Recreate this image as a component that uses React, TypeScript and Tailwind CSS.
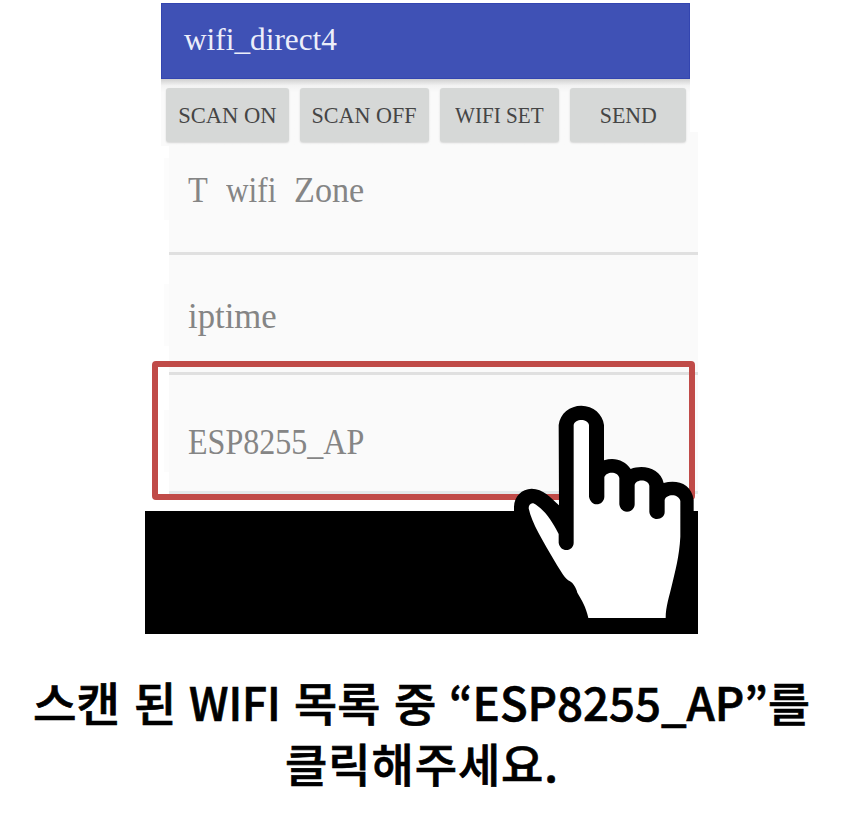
import React from "react";

const buttons = [
  { label: "SCAN ON", box: "w-[123px]", text: "scale-x-[.94]" },
  { label: "SCAN OFF", box: "w-[129px] ml-[11px]", text: "scale-x-[.92]" },
  { label: "WIFI SET", box: "w-[119px] ml-[11px]", text: "scale-x-[.88]" },
  { label: "SEND", box: "w-[116px] ml-[11px]", text: "scale-x-[.91]" },
];

function HandPointer() {
  return (
    <svg className="absolute left-[500px] top-[390px] h-[250px] w-[210px]" viewBox="0 0 630 750">
      <path
        fill="#000"
        d="M42 365V350C43 318 65 297 95 296C130 297 150 320 177 346L176 105C180 70 210 47 244 47C280 47 308 72 312 105V211C345 200 375 212 392 237C430 222 482 235 491 279C530 268 575 280 581 330V365L560 700H240Z"
      />
      <path
        fill="#fff"
        d="M265 684C258 650 245 630 232 608C228 592 218 578 210 574C195 566 185 548 165 515C130 455 95 400 86 355C86 345 92 338 100 340C130 355 155 390 176 432V458C178 472 188 480 199 480C212 480 221 470 221 458V105C225 85 263 85 267 105V320C270 335 280 343 290 343C302 343 313 333 313 320V262C318 243 354 243 358 264V343C360 358 370 365 381 365C394 365 404 355 404 343V285C408 267 444 267 448 287V366C450 380 460 387 471 387C484 387 494 378 494 366V330C500 311 536 311 541 333V440C538 500 525 545 517 580C508 620 497 650 497 684Z"
      />
    </svg>
  );
}

export default function App() {
  return (
    <div className="relative h-[824px] w-[842px] overflow-hidden bg-white pt-[3px]">
      <div className="font-['Liberation_Serif',serif]">
        <header className="ml-[161px] flex h-[76px] w-[529px] items-center border border-[#3345b0] bg-[#3f51b5] pl-[22px]">
          <span className="-mt-[2px] text-[31.3px] leading-none text-[#eceefa]">wifi_direct4</span>
        </header>
        <div className="ml-[161px] flex h-[67px] w-[537px]">
          <div className="flex w-[529px] bg-[#fafafa] bg-linear-to-b from-[#d0d0d0] via-[#f3f3f3] via-10% to-[#fafafa] to-20% pl-[5px] pt-[9px]">
            {buttons.map((b) => (
              <button
                key={b.label}
                className={"flex h-[54px] shrink-0 items-center justify-center rounded-[3px] bg-[#d6d8d7] shadow-[0_1px_2px_rgba(0,0,0,0.15)] " + b.box}
              >
                <span className={"whitespace-nowrap text-[24px] leading-none text-[#454545] " + b.text}>{b.label}</span>
              </button>
            ))}
          </div>
          <div className="h-[14px] w-[8px] self-end bg-[#fafafa]" />
        </div>
        <ul className="ml-[169px] w-[529px] text-[36px] leading-none text-[#858585]">
          <li className="relative h-[109px] border-b-[3px] border-[#e0e0e0] bg-[#fafafa] pl-[19px] pt-[26px]">
            <div className="absolute -left-[5px] top-[12px] h-[62px] w-[5px] bg-[#fcfcfc]" />
            <div className="flex">
              <span className="w-[38px] origin-left scale-x-[.9]">T</span>
              <span className="w-[68px] origin-left scale-x-[.87]">wifi</span>
              <span className="origin-left scale-x-[.95]">Zone</span>
            </div>
          </li>
          <li className="relative h-[120px] border-b-[3px] border-[#e0e0e0] bg-[#fafafa] pl-[19px] pt-[43px]">
            <div className="absolute -left-[5px] top-[29px] h-[62px] w-[5px] bg-[#fcfcfc]" />
            <span className="inline-block origin-left scale-x-[.965]">iptime</span>
          </li>
          <li className="relative h-[119px] border-b-[3px] border-[#e3e9ea] bg-[#fafafa] pl-[19px] pt-[49px]">
            <div className="absolute -left-[5px] top-[35px] h-[62px] w-[5px] bg-[#fcfcfc]" />
            <span className="inline-block origin-left scale-x-[.89]">ESP8255_AP</span>
          </li>
        </ul>
      </div>
      <div className="ml-[145px] mt-[17px] h-[123px] w-[553px] bg-black" />
      <div className="absolute left-[152px] top-[361px] h-[139px] w-[543px] rounded-[4px] border-[6px] border-[#c04b48]" />
      <HandPointer />
      <p className="mt-[37px] font-['Noto_Sans_CJK_KR',sans-serif] text-[46px] font-medium leading-[61px] text-black [-webkit-text-stroke:0.7px_black]">
        <span className="flex whitespace-nowrap pl-[33px]">
          <span className="w-[101px] origin-left scale-x-[1.03]">스캔</span>
          <span className="w-[55px]">된</span>
          <span className="w-[105px] origin-left scale-x-[.96]">WIFI</span>
          <span className="w-[100px] origin-left scale-x-[1.02]">목록</span>
          <span className="w-[55px]">중</span>
          <span className="origin-left scale-x-[.99]">“ESP8255_AP”를</span>
        </span>
        <span className="block pl-[285px] tracking-[0.9px]">클릭해주세요.</span>
      </p>
    </div>
  );
}
